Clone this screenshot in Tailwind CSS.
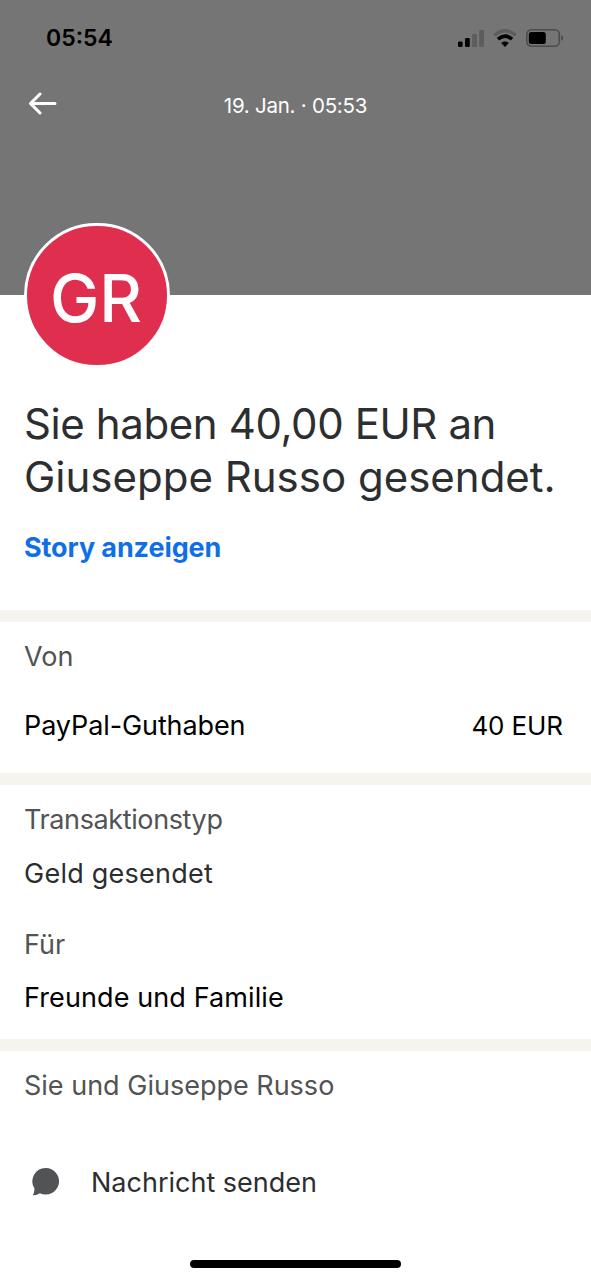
<!DOCTYPE html>
<html lang="de">
<head>
<meta charset="utf-8">
<title>Transaktion</title>
<script src="https://cdn.jsdelivr.net/npm/@tailwindcss/browser@4"></script>
</head>
<body class="bg-white font-['Inter','Liberation_Sans',sans-serif] text-[27px] leading-9 text-[#2c2e2f]">
<div class="flex h-[1280px] w-[591px] flex-col overflow-hidden whitespace-nowrap">
  <header class="flex h-[295px] shrink-0 flex-col bg-[#757575]">
    <div class="flex h-[76px] items-center pl-[46px] pr-[27px]">
      <span class="text-[23px] font-semibold text-black">05:54</span>
      <div class="ml-auto flex items-center gap-[9px]">
        <svg class="h-[18px] w-[26px]" viewBox="0 0 26 18"><rect x="0" y="12.500" width="4.600" height="5.500" rx="1.2"/><rect x="7" y="9" width="4.800" height="9" rx="1.2"/><rect x="14.200" y="5" width="4.800" height="13" rx="1.2" fill="#5d5d5d"/><rect x="21.200" y="1" width="4.800" height="17" rx="1.2" fill="#5d5d5d"/></svg>
        <svg class="h-[18px] w-6" viewBox="0 0 24 18" fill="none"><path d="M1.500 6.300Q12-3 22.500 6.300" stroke="#5d5d5d" stroke-width="3.400"/><path d="M5 10.200Q12 4 19 10.200" stroke="#000" stroke-width="3.600"/><path d="M12 18 8.200 13.900Q12 11 15.800 13.900Z" fill="#000"/></svg>
        <svg class="h-[18px] w-[38px]" viewBox="0 0 38 18"><rect x=".8" y=".8" width="32.500" height="16.400" rx="4.500" fill="none" stroke="#4b4b4b" stroke-width="1.500"/><rect x="2.800" y="3" width="17" height="12" rx="2.500"/><path d="M35.200 6.200Q37.200 7 37.200 9T35.200 11.800Z" fill="#4b4b4b"/></svg>
      </div>
    </div>
    <div class="grid h-[58px] grid-cols-[1fr_auto_1fr] items-center px-7">
      <svg class="-mt-0.5 h-6 w-[30px]" viewBox="0 0 30 24" fill="none" stroke="#fff" stroke-width="3" stroke-linecap="round" stroke-linejoin="round"><path d="M27 11.500H3M12 2 2.500 11.500 12 21"/></svg>
      <span class="pt-px text-[20.500px] tracking-[-0.25px] text-white">19. Jan. · 05:53</span>
    </div>
  </header>
  <main class="flex grow flex-col">
    <section class="h-[315px] shrink-0 px-6">
      <div class="-mt-[72px] flex h-[145px] w-[146px] items-center justify-center rounded-full border-[3px] border-white bg-[#e02e4e] text-[66px] font-medium leading-none text-white"><span class="pt-1 pr-0.5">GR</span></div>
      <h1 class="mt-[30px] text-[42px] leading-[52.500px]"><span class="tracking-[-0.4px]">Sie haben 40,00 EUR an</span><br>Giuseppe Russo gesendet.</h1>
      <a class="mt-[27px] block font-bold tracking-[-0.1px] text-[#0f70e6]">Story anzeigen</a>
    </section>
    <section class="h-[163px] shrink-0 border-t-[12px] border-[#f5f4ef] px-6">
      <h2 class="pt-[17px] text-[#515354]">Von</h2>
      <div class="mt-[33px] flex justify-between pr-1 text-black"><span class="tracking-[-0.1px]">PayPal-Guthaben</span><span class="text-[26px] tracking-[-0.1px]">40 EUR</span></div>
    </section>
    <section class="h-[266px] shrink-0 border-t-[12px] border-[#f5f4ef] px-6">
      <h2 class="pt-[17px] tracking-[-0.38px] text-[#515354]">Transaktionstyp</h2>
      <p class="mt-[18px] tracking-[0.25px]">Geld gesendet</p>
      <h2 class="mt-[35px] text-[#515354]">Für</h2>
      <p class="mt-[17px] tracking-[0.1px] text-black">Freunde und Familie</p>
    </section>
    <section class="flex grow flex-col border-t-[12px] border-[#f5f4ef] px-6">
      <h2 class="pt-[17px] text-[#515354]">Sie und Giuseppe Russo</h2>
      <div class="mt-[61px] flex items-center pl-2">
        <svg class="-mt-0.5 h-7 w-[27px]" viewBox="0 0 27 28" fill="#515354"><path d="M13.500 0A13.300 13.300 0 1 1 7.800 25.200Q4.500 27.600.7 27.200Q2.400 25.300 2.500 20.500A13.300 13.300 0 0 1 13.500 0Z"/></svg>
        <span class="ml-8">Nachricht senden</span>
      </div>
      <div class="mt-auto mb-3 h-2 w-[211px] self-center rounded-full bg-black"></div>
    </section>
  </main>
</div>
</body>
</html>
